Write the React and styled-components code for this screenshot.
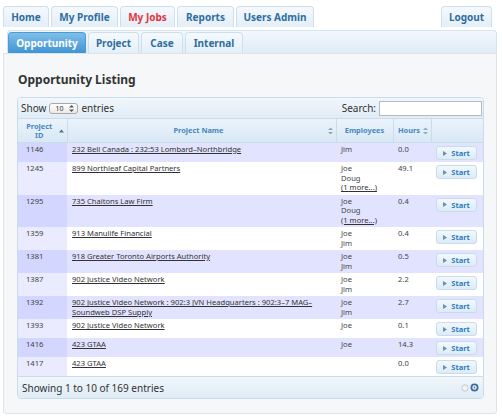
import React from "react";
import styled, { createGlobalStyle } from "styled-components";

const GlobalStyle = createGlobalStyle`
  body {
    margin: 0;
    background: #fff;
    font-family: "Noto Sans", "DejaVu Sans", sans-serif;
    color: #333;
  }
`;

const Page = styled.div`
  width: 502px;
  height: 420px;
  box-sizing: border-box;
  padding: 6px 5px 6px 3px;
  display: flex;
  flex-direction: column;
`;

const TopNav = styled.div`
  display: flex;
  align-items: flex-end;
  gap: 2px;
  padding-right: 5px;
`;

const Spacer = styled.div`
  flex: 1;
`;

const TopTab = styled.a`
  height: 21px;
  box-sizing: border-box;
  display: flex;
  align-items: center;
  justify-content: center;
  width: ${({ w }) => w}px;
  border: 1px solid #cddfee;
  border-bottom: none;
  border-radius: 4px 4px 0 0;
  background: linear-gradient(#f5f9fd, #e3eef8);
  font-size: 10px;
  font-weight: bold;
  color: ${({ current }) => (current ? "#e2353a" : "#2f6e9f")};
  cursor: pointer;
`;

const SubBar = styled.div`
  margin: 3px 0 0 4px;
  height: 23px;
  box-sizing: border-box;
  display: flex;
  align-items: flex-end;
  gap: 2px;
  border: 1px solid #d3e3f0;
  border-bottom: none;
  border-radius: 4px 4px 0 0;
  background: linear-gradient(#f3f8fc, #dfebf6);
`;

const SubTab = styled.a`
  height: 21px;
  box-sizing: border-box;
  width: ${({ w }) => w}px;
  display: flex;
  align-items: center;
  justify-content: center;
  border: 1px solid ${({ active }) => (active ? "#4b9bd6" : "#cddfee")};
  border-bottom: none;
  border-radius: 4px 4px 0 0;
  background: ${({ active }) =>
    active ? "linear-gradient(#7fbfe9, #3f94d4)" : "linear-gradient(#f5f9fd, #e4eff8)"};
  font-size: 10px;
  font-weight: bold;
  color: ${({ active }) => (active ? "#fff" : "#2f6e9f")};
  cursor: pointer;
`;

const Panel = styled.div`
  flex: 1;
  border: 1px solid #dde4eb;
  border-radius: 0 0 3px 3px;
  background: #f5f7f9;
  padding: 18px 14px 0 13px;
`;

const Heading = styled.h2`
  margin: 0 0 10px 1px;
  font-size: 12px;
  line-height: 15px;
  font-weight: bold;
  color: #333;
`;

const TableBox = styled.div`
  width: 465px;
  border: 1px solid #c8dcec;
  border-radius: 4px;
  overflow: hidden;
  background: #fff;
`;

const Toolbar = styled.div`
  height: 20px;
  display: flex;
  align-items: center;
  justify-content: space-between;
  padding: 0 1px 0 3px;
  background: linear-gradient(#f1f7fb, #e0ecf6);
  border-bottom: 1px solid #c8dcec;
  font-size: 10px;
  color: #333;
`;

const Group = styled.div`
  display: flex;
  align-items: center;
  gap: 3px;
`;

const FakeSelect = styled.div`
  width: 29px;
  height: 11px;
  box-sizing: border-box;
  display: flex;
  align-items: center;
  justify-content: space-between;
  padding: 0 3px 0 5px;
  border: 1px solid #a9a9a9;
  border-radius: 3px;
  background: linear-gradient(#fff, #e9e9e9);
  font-size: 7px;
  color: #333;
`;

const SearchInput = styled.input`
  width: 103px;
  height: 15px;
  box-sizing: border-box;
  border: 1px solid #b9b9b9;
  background: #fff;
  margin: 0;
  padding: 0 2px;
`;

const Table = styled.table`
  width: 100%;
  border-collapse: collapse;
  table-layout: fixed;
`;

const Th = styled.th`
  height: 23px;
  padding: 0 ${({ sortable }) => (sortable ? "10px" : "4px")} 0 4px;
  position: relative;
  background: linear-gradient(#ebf3fa, #d8e8f5);
  border-right: 1px solid #c8dcec;
  border-bottom: 1px solid #c8dcec;
  font-size: 7.4px;
  line-height: 9px;
  font-weight: bold;
  color: #4688c2;
  text-align: center;
  &:last-child {
    border-right: none;
  }
`;

const SortIcon = styled.span`
  position: absolute;
  right: 3px;
  top: 50%;
  transform: translateY(-50%);
  display: flex;
`;

const Tr = styled.tr`
  background: ${({ odd }) => (odd ? "#e2e4ff" : "#fff")};
`;

const Td = styled.td`
  padding: 2px 5px 2px;
  vertical-align: top;
  font-size: 7.6px;
  line-height: 9.5px;
  color: #444;
  background: ${({ sorted, odd }) => (sorted ? (odd ? "#d3d6ff" : "#eaebff") : "transparent")};
  padding-left: ${({ sorted }) => (sorted ? "8px" : "5px")};
`;

const Link = styled.a`
  color: #333;
  text-decoration: underline;
  cursor: pointer;
`;

const StartButton = styled.button`
  width: 41px;
  height: 14px;
  margin: 1px 0 0;
  padding: 0;
  display: flex;
  align-items: center;
  justify-content: center;
  gap: 4px;
  border: 1px solid #c8dcec;
  border-radius: 3px;
  background: linear-gradient(#f2f8fc, #dcebf7);
  font-family: inherit;
  font-size: 7.5px;
  font-weight: bold;
  color: #2f7cc0;
  cursor: pointer;
`;

const Footer = styled.div`
  height: 21px;
  display: flex;
  align-items: center;
  justify-content: space-between;
  padding: 0 4px;
  background: linear-gradient(#f1f7fb, #dfebf6);
  border-top: 1px solid #c8dcec;
  font-size: 10px;
  color: #333;
`;

const Pager = styled.div`
  display: flex;
  align-items: center;
  gap: 1px;
`;

const Arrows = ({ color = "#8fa9c2" }) => (
  <svg width="5" height="7" viewBox="0 0 5 7">
    <path d="M2.5 0 L5 2.6 H0 Z" fill={color} />
    <path d="M2.5 7 L5 4.4 H0 Z" fill={color} />
  </svg>
);

const SortAsc = () => (
  <svg width="5" height="4" viewBox="0 0 5 4">
    <path d="M2.5 0.5 L5 3.5 H0 Z" fill="#556f88" />
  </svg>
);

const Play = () => (
  <svg width="4" height="5" viewBox="0 0 4 5">
    <path d="M0 0 L4 2.5 L0 5 Z" fill="#6d8fae" />
  </svg>
);

const rows = [
  { id: 1146, name: "232 Bell Canada : 232:53 Lombard–Northbridge", emp: ["Jim"], hours: "0.0" },
  { id: 1245, name: "899 Northleaf Capital Partners", emp: ["Joe", "Doug"], more: true, hours: "49.1" },
  { id: 1295, name: "735 Chaitons Law Firm", emp: ["Joe", "Doug"], more: true, hours: "0.4" },
  { id: 1359, name: "913 Manulife Financial", emp: ["Joe", "Jim"], hours: "0.4" },
  { id: 1381, name: "918 Greater Toronto Airports Authority", emp: ["Joe", "Jim"], hours: "0.5" },
  { id: 1387, name: "902 Justice Video Network", emp: ["Joe", "Jim"], hours: "2.2" },
  {
    id: 1392,
    name: "902 Justice Video Network : 902:3 JVN Headquarters : 902:3–7 MAG–Soundweb DSP Supply",
    emp: ["Joe", "Jim"],
    hours: "2.7",
  },
  { id: 1393, name: "902 Justice Video Network", emp: ["Joe"], hours: "0.1" },
  { id: 1416, name: "423 GTAA", emp: ["Joe"], hours: "14.3" },
  { id: 1417, name: "423 GTAA", emp: [], hours: "0.0" },
];

const App = () => (
  <>
    <GlobalStyle />
    <Page>
      <TopNav>
        <TopTab w={46}>Home</TopTab>
        <TopTab w={67}>My Profile</TopTab>
        <TopTab w={55} current>
          My Jobs
        </TopTab>
        <TopTab w={57}>Reports</TopTab>
        <TopTab w={78}>Users Admin</TopTab>
        <Spacer />
        <TopTab w={51}>Logout</TopTab>
      </TopNav>
      <SubBar>
        <SubTab w={78} active>
          Opportunity
        </SubTab>
        <SubTab w={51}>Project</SubTab>
        <SubTab w={42}>Case</SubTab>
        <SubTab w={58}>Internal</SubTab>
      </SubBar>
      <Panel>
        <Heading>Opportunity Listing</Heading>
        <TableBox>
          <Toolbar>
            <Group>
              Show
              <FakeSelect>
                10 <Arrows color="#555" />
              </FakeSelect>
              entries
            </Group>
            <Group>
              Search:
              <SearchInput type="text" />
            </Group>
          </Toolbar>
          <Table>
            <colgroup>
              <col style={{ width: 49 }} />
              <col style={{ width: 269 }} />
              <col style={{ width: 57 }} />
              <col style={{ width: 38 }} />
              <col style={{ width: 52 }} />
            </colgroup>
            <thead>
              <tr>
                <Th sortable>
                  Project
                  <br />
                  ID
                  <SortIcon>
                    <SortAsc />
                  </SortIcon>
                </Th>
                <Th sortable>
                  Project Name
                  <SortIcon>
                    <Arrows />
                  </SortIcon>
                </Th>
                <Th>Employees</Th>
                <Th sortable>
                  Hours
                  <SortIcon>
                    <Arrows />
                  </SortIcon>
                </Th>
                <Th />
              </tr>
            </thead>
            <tbody>
              {rows.map((r, i) => {
                const odd = i % 2 === 0;
                return (
                  <Tr key={r.id} odd={odd}>
                    <Td sorted odd={odd}>
                      {r.id}
                    </Td>
                    <Td>
                      <Link>{r.name}</Link>
                    </Td>
                    <Td>
                      {r.emp.map((e) => (
                        <div key={e}>{e}</div>
                      ))}
                      {r.more && <Link>(1 more...)</Link>}
                    </Td>
                    <Td>{r.hours}</Td>
                    <Td>
                      <StartButton>
                        <Play /> Start
                      </StartButton>
                    </Td>
                  </Tr>
                );
              })}
            </tbody>
          </Table>
          <Footer>
            <span>Showing 1 to 10 of 169 entries</span>
            <Pager>
              <svg width="8" height="8" viewBox="0 0 8 8">
                <circle cx="4" cy="4" r="3.2" fill="#f2f2f2" stroke="#c4c9ce" strokeWidth="1" />
              </svg>
              <svg width="9" height="9" viewBox="0 0 9 9">
                <circle cx="4.5" cy="4.5" r="4" fill="#3c6d9c" />
                <circle cx="4.5" cy="4.5" r="2.2" fill="#e9f1f8" />
                <path d="M3.8 3.2 L5.6 4.5 L3.8 5.8 Z" fill="#3c6d9c" />
              </svg>
            </Pager>
          </Footer>
        </TableBox>
      </Panel>
    </Page>
  </>
);

export default App;
